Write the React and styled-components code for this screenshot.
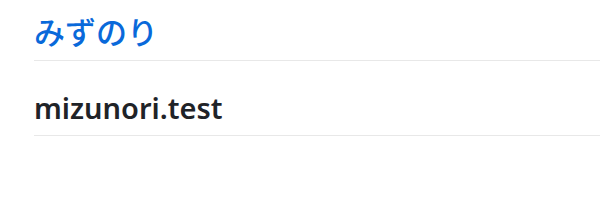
import React from "react";
import styled, { createGlobalStyle } from "styled-components";

const Global = createGlobalStyle`
  html, body { margin: 0; padding: 0; background: #ffffff; overflow: hidden; }
  body { font-family: "Noto Sans", "Noto Sans CJK JP", sans-serif; }
`;

const Page = styled.div`
  padding: 0 0 0 34px;
`;

const Title = styled.h1`
  margin: 0;
  padding: 11px 0 9px;
  font-size: 31px;
  font-weight: 500;
  line-height: 40px;
  color: #0969da;
  border-bottom: 1px solid #e8e8e8;
  font-family: "Noto Sans CJK JP", "Noto Sans", sans-serif;
`;

const Heading = styled.h2`
  margin: 0;
  padding: 27px 0 7px;
  font-size: 29px;
  font-weight: 600;
  line-height: 40px;
  color: #1f2328;
  border-bottom: 1px solid #e8e8e8;
`;

export default function App() {
  return (
    <>
      <Global />
      <Page>
        <Title>みずのり</Title>
        <Heading>mizunori.test</Heading>
      </Page>
    </>
  );
}
